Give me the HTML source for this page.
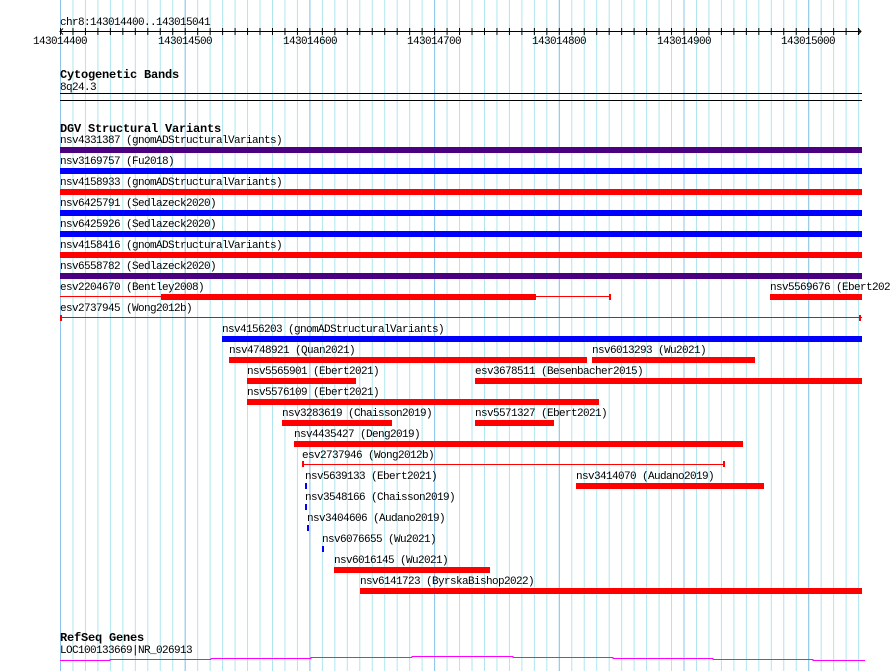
<!DOCTYPE html>
<html><head><meta charset="utf-8"><style>
html,body{margin:0;padding:0;background:#fff;width:890px;height:671px;overflow:hidden}
svg{display:block}
text{font-family:"Liberation Mono",monospace;font-size:11px;letter-spacing:-0.6px;fill:#000}
.b{font-weight:bold;font-size:12px;letter-spacing:-0.2px}
</style></head><body>
<svg width="890" height="671" xmlns="http://www.w3.org/2000/svg">
<defs>
<pattern id="g" x="60" y="0" width="12.47" height="671" patternUnits="userSpaceOnUse">
<rect x="0" y="0" width="1" height="671" fill="#aee6ee"/>
</pattern>
<pattern id="tk" x="60" y="0" width="12.47" height="671" patternUnits="userSpaceOnUse"><rect x="0" y="0" width="1" height="671" fill="#000"/></pattern>
</defs>
<rect x="60" y="0" width="802" height="671" fill="url(#g)"/>
<g fill="#8ec4ea">
<rect x="60" y="0" width="1" height="671"/><rect x="184.7" y="0" width="1" height="671"/><rect x="309.4" y="0" width="1" height="671"/><rect x="434.1" y="0" width="1" height="671"/><rect x="558.8" y="0" width="1" height="671"/><rect x="683.5" y="0" width="1" height="671"/><rect x="808.2" y="0" width="1" height="671"/>
</g>
<text x="60" y="25">chr8:143014400..143015041</text>
<line x1="60" y1="31.5" x2="861" y2="31.5" stroke="#000"/>
<path d="M63 28.5 L60 31.5 L63 34.5 M858 28.5 L861 31.5 L858 34.5" stroke="#000" fill="none"/>
<rect x="60" y="28" width="802" height="7" fill="url(#tk)"/>
<g text-anchor="middle">
<text x="60" y="44">143014400</text><text x="185" y="44">143014500</text><text x="310" y="44">143014600</text><text x="434" y="44">143014700</text><text x="559" y="44">143014800</text><text x="684" y="44">143014900</text><text x="808" y="44">143015000</text>
</g>
<text x="60" y="78" class="b">Cytogenetic Bands</text>
<text x="60" y="90">8q24.3</text>
<rect x="60" y="93" width="802" height="1" fill="#000"/>
<rect x="60" y="100" width="802" height="1" fill="#000"/>
<text x="60" y="132" class="b">DGV Structural Variants</text>
<text x="60" y="143">nsv4331387 (gnomADStructuralVariants)</text>
<rect x="60" y="147" width="802" height="6" fill="#4b0082"/>
<text x="60" y="164">nsv3169757 (Fu2018)</text>
<rect x="60" y="168" width="802" height="6" fill="#0000ff"/>
<text x="60" y="185">nsv4158933 (gnomADStructuralVariants)</text>
<rect x="60" y="189" width="802" height="6" fill="#ff0000"/>
<text x="60" y="206">nsv6425791 (Sedlazeck2020)</text>
<rect x="60" y="210" width="802" height="6" fill="#0000ff"/>
<text x="60" y="227">nsv6425926 (Sedlazeck2020)</text>
<rect x="60" y="231" width="802" height="6" fill="#0000ff"/>
<text x="60" y="248">nsv4158416 (gnomADStructuralVariants)</text>
<rect x="60" y="252" width="802" height="6" fill="#ff0000"/>
<text x="60" y="269">nsv6558782 (Sedlazeck2020)</text>
<rect x="60" y="273" width="802" height="6" fill="#4b0082"/>
<text x="60" y="290">esv2204670 (Bentley2008)</text>
<rect x="60" y="296" width="550" height="1" fill="#ff0000"/>
<rect x="161" y="294" width="375" height="6" fill="#ff0000"/>
<rect x="609" y="294" width="2" height="6" fill="#ff0000"/>
<text x="770" y="290">nsv5569676 (Ebert2021)</text>
<rect x="770" y="294" width="92" height="6" fill="#ff0000"/>
<text x="60" y="311">esv2737945 (Wong2012b)</text>
<rect x="60" y="317" width="802" height="1" fill="#ff0000"/>
<rect x="60" y="315" width="2" height="6" fill="#ff0000"/>
<rect x="859" y="315" width="2" height="6" fill="#ff0000"/>
<text x="222" y="332">nsv4156203 (gnomADStructuralVariants)</text>
<rect x="222" y="336" width="640" height="6" fill="#0000ff"/>
<text x="229" y="353">nsv4748921 (Quan2021)</text>
<rect x="229" y="357" width="358" height="6" fill="#ff0000"/>
<text x="592" y="353">nsv6013293 (Wu2021)</text>
<rect x="592" y="357" width="163" height="6" fill="#ff0000"/>
<text x="247" y="374">nsv5565901 (Ebert2021)</text>
<rect x="247" y="378" width="109" height="6" fill="#ff0000"/>
<text x="475" y="374">esv3678511 (Besenbacher2015)</text>
<rect x="475" y="378" width="387" height="6" fill="#ff0000"/>
<text x="247" y="395">nsv5576109 (Ebert2021)</text>
<rect x="247" y="399" width="352" height="6" fill="#ff0000"/>
<text x="282" y="416">nsv3283619 (Chaisson2019)</text>
<rect x="282" y="420" width="110" height="6" fill="#ff0000"/>
<text x="475" y="416">nsv5571327 (Ebert2021)</text>
<rect x="475" y="420" width="79" height="6" fill="#ff0000"/>
<text x="294" y="437">nsv4435427 (Deng2019)</text>
<rect x="294" y="441" width="449" height="6" fill="#ff0000"/>
<text x="302" y="458">esv2737946 (Wong2012b)</text>
<rect x="302" y="464" width="423" height="1" fill="#ff0000"/>
<rect x="302" y="461" width="2" height="6" fill="#ff0000"/>
<rect x="723" y="461" width="2" height="6" fill="#ff0000"/>
<text x="305" y="479">nsv5639133 (Ebert2021)</text>
<rect x="305" y="483" width="2" height="6" fill="#0000ff"/>
<text x="576" y="479">nsv3414070 (Audano2019)</text>
<rect x="576" y="483" width="188" height="6" fill="#ff0000"/>
<text x="305" y="500">nsv3548166 (Chaisson2019)</text>
<rect x="305" y="504" width="2" height="6" fill="#0000ff"/>
<text x="307" y="521">nsv3404606 (Audano2019)</text>
<rect x="307" y="525" width="2" height="6" fill="#0000ff"/>
<text x="322" y="542">nsv6076655 (Wu2021)</text>
<rect x="322" y="546" width="2" height="6" fill="#0000ff"/>
<text x="334" y="563">nsv6016145 (Wu2021)</text>
<rect x="334" y="567" width="156" height="6" fill="#ff0000"/>
<text x="360" y="584">nsv6141723 (ByrskaBishop2022)</text>
<rect x="360" y="588" width="502" height="6" fill="#ff0000"/>
<text x="60" y="641" class="b">RefSeq Genes</text>
<text x="60" y="653">LOC100133669|NR_026913</text>
<path d="M60 660.5H110V659.5H211V658.5H311V657.5H412V656.5H513V657.5H613V658.5H713V659.5H813V660.5H865" stroke="#ff00ff" stroke-width="1" fill="none"/>
</svg>
</body></html>
